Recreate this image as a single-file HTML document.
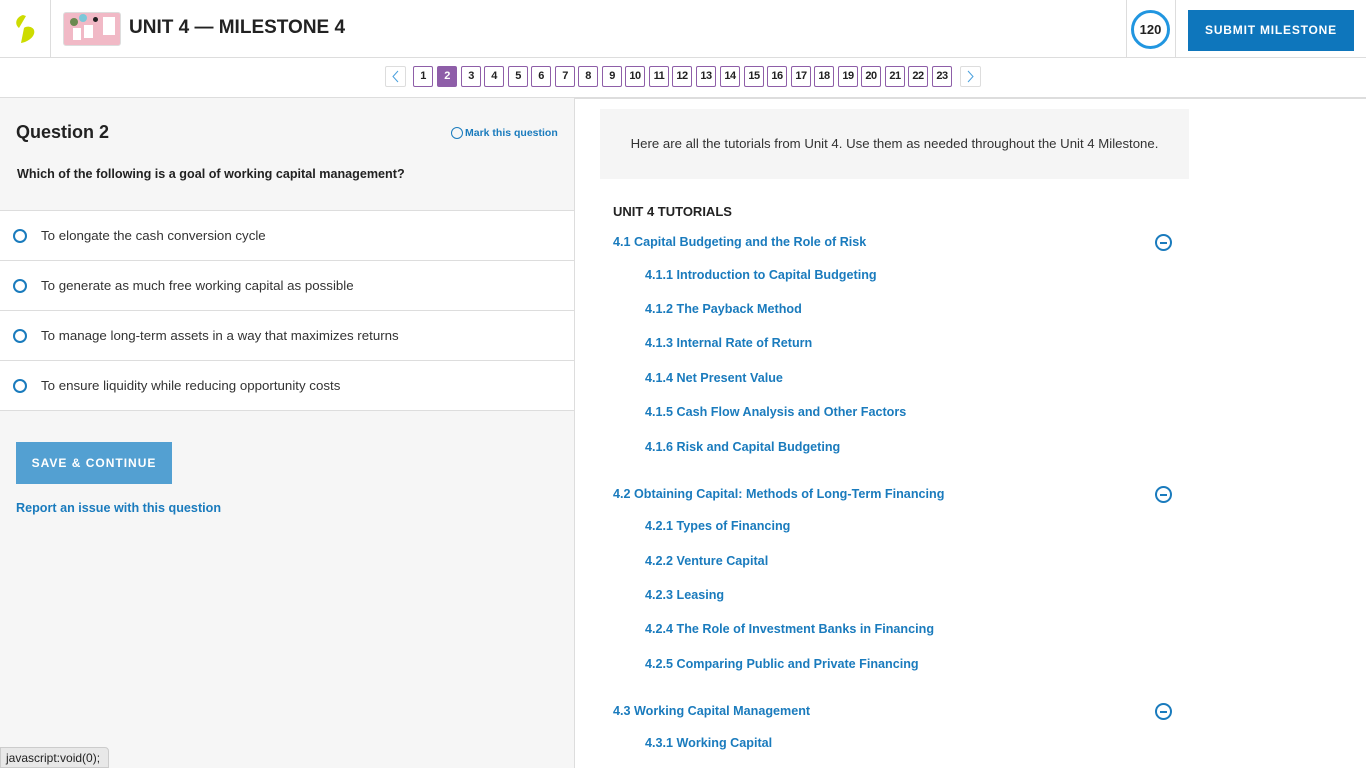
<!DOCTYPE html>
<html><head><meta charset="utf-8"><style>
*{box-sizing:border-box;margin:0;padding:0}
body{width:1366px;height:768px;overflow:hidden;background:#fff;font-family:"Liberation Sans",Arial,sans-serif;color:#222;position:relative}
.a{position:absolute}
.hdr{left:0;top:0;width:1366px;height:58px;border-bottom:1px solid #ddd}
.pg{top:66px;width:20px;height:21px;border:1px solid #8e5ea8;border-radius:2px;font-size:11px;font-weight:bold;text-align:center;line-height:19px;color:#222;letter-spacing:-0.5px}
.arr{top:66px;width:21px;height:21px;border:1px solid #ddd;border-radius:2px}
.left{left:0;top:98px;width:575px;height:670px;background:#f6f6f6;border-right:1px solid #ddd}
.opt{left:0;width:574px;height:50px;background:#fff;border-bottom:1px solid #ddd;font-size:13.3px;color:#333}
.opt i{position:absolute;left:13px;top:18px;width:14px;height:14px;border:2px solid #1a7bbd;border-radius:50%}
.opt span{position:absolute;left:41px;top:17px}
.l{color:#1a7bbd;font-size:12.6px;font-weight:bold}
.sec{left:613px}
.sub{left:645px}
.min{left:1155px;width:17px;height:17px;border:2px solid #1a7bbd;border-radius:50%}
.min:after{content:"";position:absolute;left:3px;top:5.5px;width:7px;height:2px;background:#1a7bbd}
</style></head><body>
<div class="a hdr"></div>
<div class="a" style="left:50px;top:0;width:1px;height:57px;background:#ddd"></div>
<svg class="a" style="left:14px;top:14px" width="24" height="30" viewBox="0 0 24 30"><path d="M9 1 C2 3 0 10 5 14 L12 2 Z" fill="#cddc00"/><path d="M7 29 C14 28 22 22 20 16 C18 12 12 12 10 14 Z" fill="#cddc00"/></svg>
<div class="a" style="left:63px;top:12px;width:58px;height:34px;background:#f1b9c6;border-radius:3px;border:1px solid #ddd"></div>
<div class="a" style="left:70px;top:18px;width:8px;height:8px;background:#6a8a50;border-radius:50%"></div>
<div class="a" style="left:79px;top:14px;width:8px;height:8px;background:#7cc8d9;border-radius:50%"></div>
<div class="a" style="left:73px;top:28px;width:8px;height:12px;background:#fff"></div>
<div class="a" style="left:84px;top:25px;width:9px;height:13px;background:#fff"></div>
<div class="a" style="left:103px;top:17px;width:12px;height:18px;background:#fff"></div>
<div class="a" style="left:93px;top:17px;width:5px;height:5px;background:#222;border-radius:50%"></div>
<div class="a" style="left:129px;top:17px;font-size:19px;font-weight:bold;color:#222">UNIT 4 — MILESTONE 4</div>
<div class="a" style="left:1126px;top:0;width:1px;height:57px;background:#ddd"></div>
<div class="a" style="left:1175px;top:0;width:1px;height:57px;background:#ddd"></div>
<div class="a" style="left:1131px;top:10px;width:39px;height:39px;border:3px solid #2196e0;border-radius:50%;text-align:center;line-height:33px;font-size:13px;font-weight:bold;color:#222">120</div>
<div class="a" style="left:1188px;top:10px;width:166px;height:41px;background:#0e76bc;color:#fff;font-size:12px;font-weight:bold;letter-spacing:0.8px;text-align:center;line-height:41px">SUBMIT MILESTONE</div>
<div class="a" style="left:0;top:97px;width:1366px;height:2px;background:#ddd"></div>
<div class="a arr" style="left:385px"><svg width="19" height="19"><path d="M12 4 L7 9.5 L12 15" stroke="#4aa0dd" fill="none"/></svg></div>
<div class="a arr" style="left:960px"><svg width="19" height="19"><path d="M7 4 L12 9.5 L7 15" stroke="#4aa0dd" fill="none"/></svg></div>
<div class="a pg" style="left:413px">1</div>
<div class="a pg" style="left:437px;background:#8e5ea8;color:#fff">2</div>
<div class="a pg" style="left:461px">3</div>
<div class="a pg" style="left:484px">4</div>
<div class="a pg" style="left:508px">5</div>
<div class="a pg" style="left:531px">6</div>
<div class="a pg" style="left:555px">7</div>
<div class="a pg" style="left:578px">8</div>
<div class="a pg" style="left:602px">9</div>
<div class="a pg" style="left:625px">10</div>
<div class="a pg" style="left:649px">11</div>
<div class="a pg" style="left:672px">12</div>
<div class="a pg" style="left:696px">13</div>
<div class="a pg" style="left:720px">14</div>
<div class="a pg" style="left:744px">15</div>
<div class="a pg" style="left:767px">16</div>
<div class="a pg" style="left:791px">17</div>
<div class="a pg" style="left:814px">18</div>
<div class="a pg" style="left:838px">19</div>
<div class="a pg" style="left:861px">20</div>
<div class="a pg" style="left:885px">21</div>
<div class="a pg" style="left:908px">22</div>
<div class="a pg" style="left:932px">23</div>

<div class="a left"></div>
<div class="a" style="left:16px;top:122px;font-size:18px;font-weight:bold;color:#222">Question 2</div>
<div class="a" style="left:451px;top:127px;width:12px;height:12px;border:1.5px solid #1a7bbd;border-radius:50%"></div>
<div class="a l" style="left:465px;top:127px;font-size:10.5px">Mark this question</div>
<div class="a" style="left:17px;top:167px;font-size:12.6px;font-weight:bold;color:#222">Which of the following is a goal of working capital management?</div>
<div class="a" style="left:0;top:210px;width:574px;height:1px;background:#ddd"></div>
<div class="a opt" style="top:211px"><i></i><span>To elongate the cash conversion cycle</span></div>
<div class="a opt" style="top:261px"><i></i><span>To generate as much free working capital as possible</span></div>
<div class="a opt" style="top:311px"><i></i><span>To manage long-term assets in a way that maximizes returns</span></div>
<div class="a opt" style="top:361px"><i></i><span>To ensure liquidity while reducing opportunity costs</span></div>
<div class="a" style="left:16px;top:442px;width:156px;height:42px;background:#53a0d2;color:#fff;font-size:12px;font-weight:bold;letter-spacing:1px;text-align:center;line-height:42px">SAVE &amp; CONTINUE</div>
<div class="a l" style="left:16px;top:501px">Report an issue with this question</div>
<div class="a" style="left:0;top:747px;width:109px;height:21px;background:#e8e8e8;border:1px solid #ccc;border-radius:0 4px 0 0;font-size:12px;color:#222;padding:3px 5px">javascript:void(0);</div>

<div class="a" style="left:600px;top:109px;width:589px;height:70px;background:#f5f5f5"></div>
<div class="a" style="left:600px;top:136px;width:589px;text-align:center;font-size:13.2px;color:#333">Here are all the tutorials from Unit 4. Use them as needed throughout the Unit 4 Milestone.</div>
<div class="a" style="left:613px;top:204px;font-size:13px;font-weight:bold;color:#222">UNIT 4 TUTORIALS</div>
<div class="a l sec" style="top:235px">4.1 Capital Budgeting and the Role of Risk</div><div class="a min" style="top:234px"></div>
<div class="a l sub" style="top:268px">4.1.1 Introduction to Capital Budgeting</div>
<div class="a l sub" style="top:302px">4.1.2 The Payback Method</div>
<div class="a l sub" style="top:336px">4.1.3 Internal Rate of Return</div>
<div class="a l sub" style="top:371px">4.1.4 Net Present Value</div>
<div class="a l sub" style="top:405px">4.1.5 Cash Flow Analysis and Other Factors</div>
<div class="a l sub" style="top:440px">4.1.6 Risk and Capital Budgeting</div>
<div class="a l sec" style="top:487px">4.2 Obtaining Capital: Methods of Long-Term Financing</div><div class="a min" style="top:486px"></div>
<div class="a l sub" style="top:519px">4.2.1 Types of Financing</div>
<div class="a l sub" style="top:554px">4.2.2 Venture Capital</div>
<div class="a l sub" style="top:588px">4.2.3 Leasing</div>
<div class="a l sub" style="top:622px">4.2.4 The Role of Investment Banks in Financing</div>
<div class="a l sub" style="top:657px">4.2.5 Comparing Public and Private Financing</div>
<div class="a l sec" style="top:704px">4.3 Working Capital Management</div><div class="a min" style="top:703px"></div>
<div class="a l sub" style="top:736px">4.3.1 Working Capital</div>
</body></html>
